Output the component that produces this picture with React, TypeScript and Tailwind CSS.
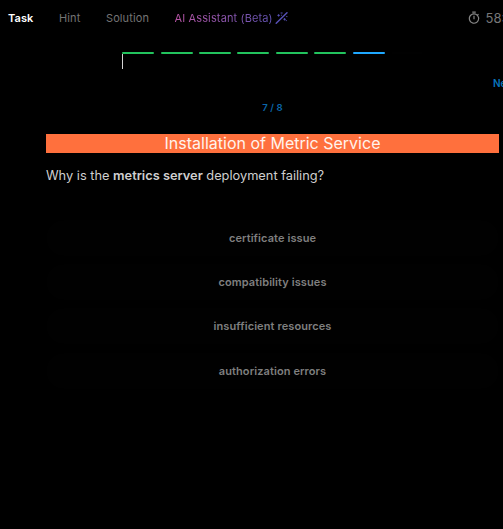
import { MdOutlineTimer } from "react-icons/md";

const answers = ["certificate issue", "compatibility issues", "insufficient resources", "authorization errors"];
const steps = [
  "bg-[#22c35d]", "bg-[#22c35d]", "bg-[#22c35d]", "bg-[#22c35d]",
  "bg-[#22c35d]", "bg-[#22c35d]", "bg-[#1fa8ff]", "bg-[#010101]",
];

function WandIcon() {
  return (
    <svg className="ml-0.5 size-3.5 shrink-0" viewBox="0 0 14 14" fill="none" stroke="#5650b5" strokeLinecap="round">
      <path d="M1.2 12.3 12 1.8" strokeWidth="1.5" />
      <path d="M2.8 4.4h1.6M3.6 3.6v1.6M6 2h1.2M8.8 8.3h1.6M9.6 7.5v1.6M11.6 5.6h.4M6.3 4.2h.2M11.2 9.6h.2" strokeWidth="1" />
    </svg>
  );
}

export default function App() {
  return (
    <div className="flex h-[529px] w-[503px] flex-col overflow-hidden bg-black font-['Inter',sans-serif]">
      <header className="flex h-[36px] shrink-0 items-center pl-2 text-[11px] leading-4 tracking-[0.1px] text-[#747474]">
        <div className="w-[51px] shrink-0 font-semibold text-white">Task</div>
        <div className="w-[47px] shrink-0">Hint</div>
        <div className="w-[68.5px] shrink-0">Solution</div>
        <div className="flex w-[292px] shrink-0 items-center">
          <span className="bg-linear-to-r from-[#b853a4] to-[#6253b5] bg-clip-text tracking-[0.13px] whitespace-nowrap text-transparent">AI Assistant (Beta)</span>
          <WandIcon />
        </div>
        <MdOutlineTimer className="mr-[5px] size-3.5 shrink-0 text-[#858585]" />
        <span className="shrink-0 text-[13px] tracking-normal whitespace-nowrap text-[#777]">58:12</span>
      </header>
      <div className="mt-4 flex h-[17px] shrink-0 gap-[6.4px] pl-[122.3px]">
        {steps.map((color, i) => (
          <div key={i} className="w-8 shrink-0">
            <div className={`h-0.5 rounded-full ${color}`} />
            {i === 0 && <div className="h-[15px] w-px bg-[#d4d4d4]" />}
          </div>
        ))}
      </div>
      <div className="mt-1.5 h-4 shrink-0 pl-[493px] text-[10px] leading-4 font-semibold whitespace-nowrap text-[#0875bd]">Next</div>
      <main className="mt-[9px] ml-[46px] w-[453px] shrink-0">
        <div className="h-4 text-center text-[9.6px] leading-4 font-semibold tracking-[0.1px] text-[#0b67aa]">7 / 8</div>
        <h1 className="mt-[18px] h-[19px] bg-[#ff703d] text-center text-base leading-[19px] text-[#fff3ec]">Installation of Metric Service</h1>
        <p className="mt-[13px] h-5 text-[12.8px] leading-5 text-[#cfcfcf]">
          Why is the <strong className="font-semibold">metrics server</strong> deployment failing?
        </p>
        <div className="mt-[33.8px] flex flex-col gap-[8.3px]">
          {answers.map((answer) => (
            <button key={answer} className="h-9 rounded-full bg-[#010101] text-[11px] leading-4 font-semibold tracking-[0.1px] text-[#7f7f7f]">{answer}</button>
          ))}
        </div>
      </main>
    </div>
  );
}
